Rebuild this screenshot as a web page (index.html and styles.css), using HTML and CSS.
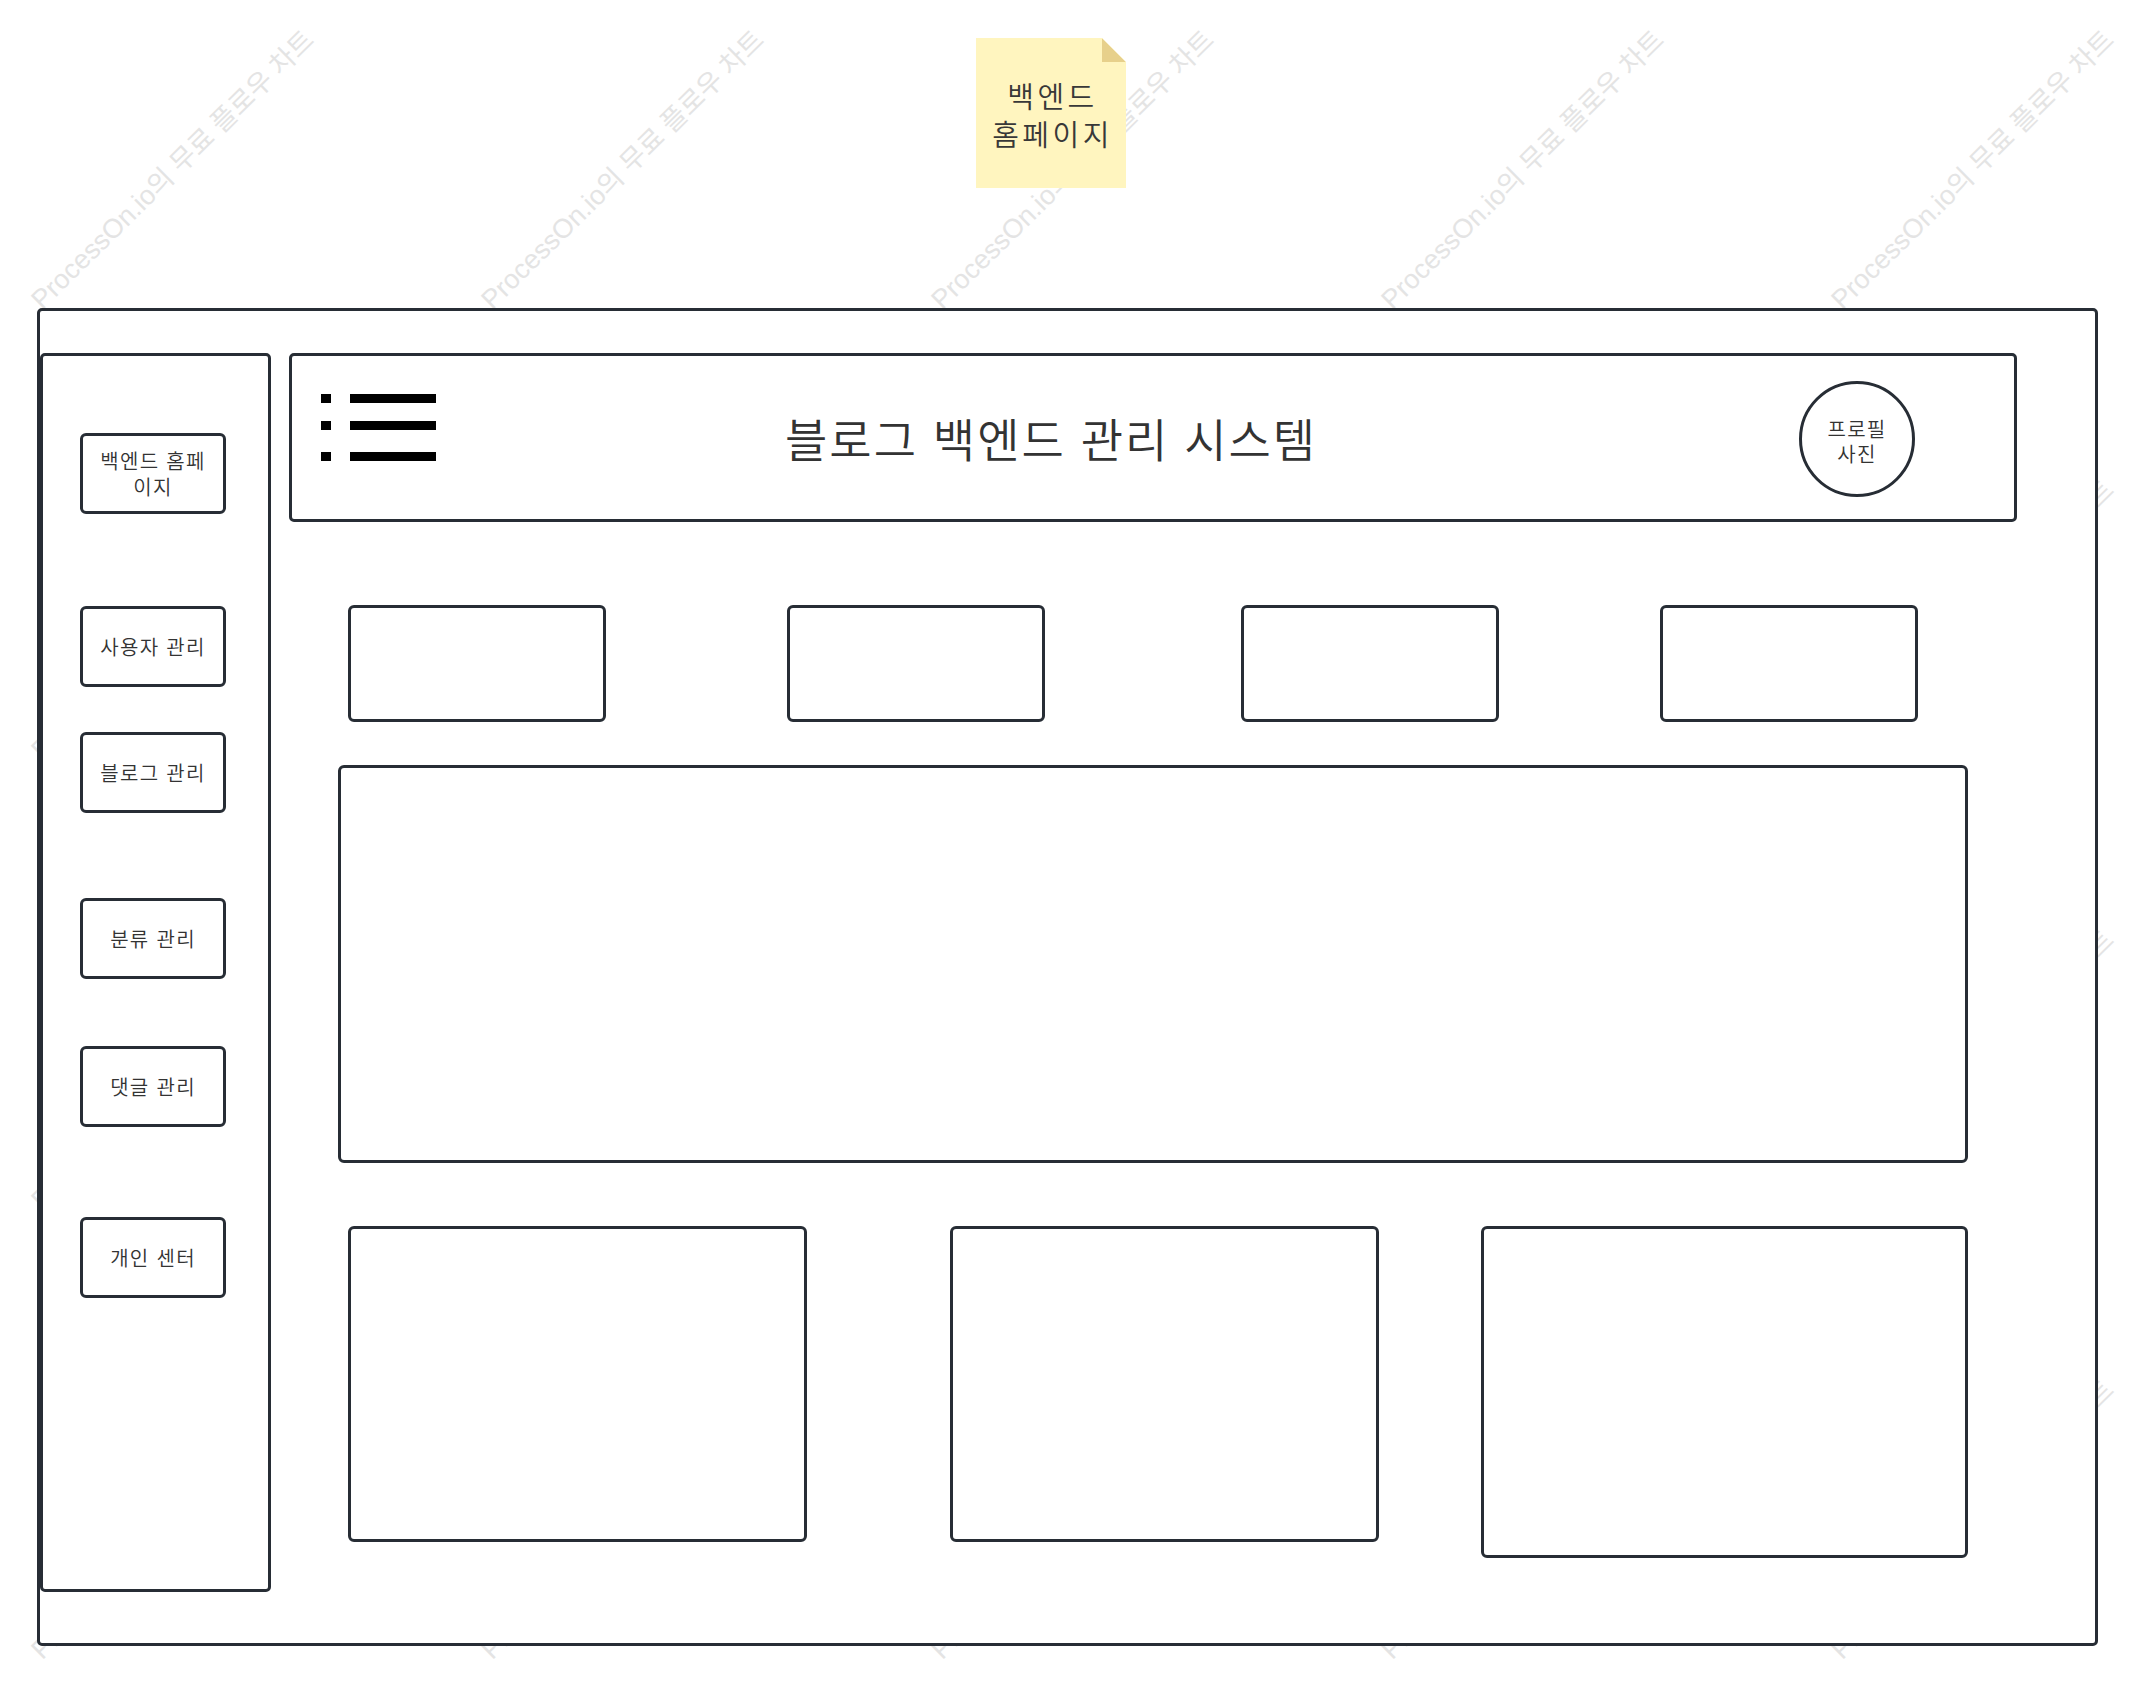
FILE: index.html
```html
<!DOCTYPE html>
<html lang="ko">
<head>
<meta charset="utf-8">
<title>블로그 백엔드 관리 시스템</title>
<link rel="stylesheet" href="styles.css">
</head>
<body>
<div class="canvas">
  <div class="watermarks">
    <div class="wm"><span>ProcessOn.io의 무료 플로우 차트</span></div>
    <div class="wm"><span>ProcessOn.io의 무료 플로우 차트</span></div>
    <div class="wm"><span>ProcessOn.io의 무료 플로우 차트</span></div>
    <div class="wm"><span>ProcessOn.io의 무료 플로우 차트</span></div>
    <div class="wm"><span>ProcessOn.io의 무료 플로우 차트</span></div>
    <div class="wm"><span>ProcessOn.io의 무료 플로우 차트</span></div>
    <div class="wm"><span>ProcessOn.io의 무료 플로우 차트</span></div>
    <div class="wm"><span>ProcessOn.io의 무료 플로우 차트</span></div>
    <div class="wm"><span>ProcessOn.io의 무료 플로우 차트</span></div>
    <div class="wm"><span>ProcessOn.io의 무료 플로우 차트</span></div>
    <div class="wm"><span>ProcessOn.io의 무료 플로우 차트</span></div>
    <div class="wm"><span>ProcessOn.io의 무료 플로우 차트</span></div>
    <div class="wm"><span>ProcessOn.io의 무료 플로우 차트</span></div>
    <div class="wm"><span>ProcessOn.io의 무료 플로우 차트</span></div>
    <div class="wm"><span>ProcessOn.io의 무료 플로우 차트</span></div>
    <div class="wm"><span>ProcessOn.io의 무료 플로우 차트</span></div>
    <div class="wm"><span>ProcessOn.io의 무료 플로우 차트</span></div>
    <div class="wm"><span>ProcessOn.io의 무료 플로우 차트</span></div>
    <div class="wm"><span>ProcessOn.io의 무료 플로우 차트</span></div>
    <div class="wm"><span>ProcessOn.io의 무료 플로우 차트</span></div>
  </div>

  <div class="content">
    <div class="sticky"><div class="sticky-text">백엔드<br>홈페이지</div></div>

    <div class="frame">
      <aside class="sidebar">
        <div class="nav nav-1">백엔드 홈페<br>이지</div>
        <div class="nav nav-2">사용자 관리</div>
        <div class="nav nav-3">블로그 관리</div>
        <div class="nav nav-4">분류 관리</div>
        <div class="nav nav-5">댓글 관리</div>
        <div class="nav nav-6">개인 센터</div>
      </aside>

      <main class="main">
        <header class="header">
          <svg class="menu-icon" width="115" height="67" viewBox="0 0 115 67" aria-hidden="true">
            <rect x="0" y="0" width="10" height="9" fill="#000"/>
            <rect x="29" y="0" width="86" height="9" fill="#000"/>
            <rect x="0" y="27" width="10" height="9" fill="#000"/>
            <rect x="29" y="27" width="86" height="9" fill="#000"/>
            <rect x="0" y="58" width="10" height="9" fill="#000"/>
            <rect x="29" y="58" width="86" height="9" fill="#000"/>
          </svg>
          <h1 class="title">블로그 백엔드 관리 시스템</h1>
          <div class="avatar">프로필<br>사진</div>
        </header>

        <section class="stats">
          <div class="box stat stat-1"></div>
          <div class="box stat stat-2"></div>
          <div class="box stat stat-3"></div>
          <div class="box stat stat-4"></div>
        </section>

        <section class="box panel"></section>

        <section class="bottom">
          <div class="box card card-1"></div>
          <div class="box card card-2"></div>
          <div class="box card card-3"></div>
        </section>
      </main>
    </div>
  </div>
</div>
</body>
</html>
```

FILE: styles.css
```css
* {
  box-sizing: border-box;
}

html, body {
  margin: 0;
  padding: 0;
  background: #ffffff;
}

body {
  font-family: "Noto Sans CJK KR", "Liberation Sans", sans-serif;
  color: #333333;
}

.canvas {
  position: relative;
  width: 2134px;
  height: 1682px;
  overflow: hidden;
  background: #ffffff;
}

/* watermark layer, under the diagram */
.watermarks {
  position: absolute;
  inset: 0;
  display: grid;
  grid-template-columns: repeat(5, 450px);
  grid-auto-rows: 450px;
  z-index: 0;
  pointer-events: none;
}

.wm {
  position: relative;
}

.wm span {
  position: absolute;
  left: 171px;
  top: 168px;
  transform: translate(-50%, -50%) rotate(-44.5deg);
  white-space: nowrap;
  font-family: "Liberation Sans", "Noto Sans CJK KR", sans-serif;
  font-size: 27px;
  color: #e4e4e4;
}

.content {
  position: relative;
  z-index: 1;
  padding-top: 38px;
}

/* sticky note */
.sticky {
  position: relative;
  margin-left: 976px;
  width: 150px;
  height: 150px;
  background: #fff5bf;
  clip-path: polygon(0 0, calc(100% - 24px) 0, 100% 24px, 100% 100%, 0 100%);
  display: flex;
  align-items: center;
  justify-content: center;
}

.sticky::after {
  content: "";
  position: absolute;
  top: 0;
  right: 0;
  width: 24px;
  height: 24px;
  background: #e7d08b;
  clip-path: polygon(0 0, 0 100%, 100% 100%);
}

.sticky-text {
  font-size: 29px;
  font-weight: 350;
  line-height: 38px;
  letter-spacing: 3.5px;
  text-align: center;
  color: #383838;
  margin-top: 2px;
  margin-left: 3px;
}

/* outer frame */
.frame {
  margin-top: 120px;
  margin-left: 37px;
  width: 2061px;
  height: 1338px;
  border: 3px solid #272d35;
  border-radius: 5px;
  background: #ffffff;
  display: flex;
  align-items: flex-start;
  padding-top: 42px;
}

.sidebar {
  width: 231px;
  height: 1239px;
  border: 3px solid #272d35;
  border-radius: 5px;
  background: #ffffff;
  display: flex;
  flex-direction: column;
  padding-left: 37px;
}

.nav {
  width: 146px;
  height: 81px;
  border: 3px solid #272d35;
  border-radius: 6px;
  background: #ffffff;
  display: flex;
  align-items: center;
  justify-content: center;
  text-align: center;
  font-size: 20px;
  font-weight: 350;
  line-height: 25.5px;
  letter-spacing: 1.3px;
  color: #333333;
}

.nav-1 { margin-top: 77px; }
.nav-2 { margin-top: 92px; }
.nav-3 { margin-top: 45px; }
.nav-4 { margin-top: 85px; }
.nav-5 { margin-top: 67px; }
.nav-6 { margin-top: 90px; }

.main {
  margin-left: 18px;
  width: 1728px;
  display: flex;
  flex-direction: column;
}

.header {
  height: 169px;
  border: 3px solid #272d35;
  border-radius: 5px;
  background: #ffffff;
  display: flex;
  align-items: center;
  padding-left: 29px;
}

.menu-icon {
  align-self: flex-start;
  margin-top: 38px;
  flex: none;
}

.title {
  margin: 0 0 0 349px;
  font-size: 46px;
  font-weight: 350;
  letter-spacing: 2px;
  line-height: 1;
  color: #333333;
  white-space: nowrap;
  position: relative;
  top: -1px;
}

.avatar {
  margin-left: auto;
  margin-right: 99px;
  width: 116px;
  height: 116px;
  border: 3px solid #272d35;
  border-radius: 50%;
  display: flex;
  align-items: center;
  justify-content: center;
  text-align: center;
  font-size: 20px;
  font-weight: 350;
  line-height: 25.5px;
  letter-spacing: 1.3px;
  color: #333333;
  margin-top: 2px;
  padding-top: 5px;
  flex: none;
}

.box {
  border: 3px solid #272d35;
  border-radius: 6px;
  background: #ffffff;
}

.stats {
  display: flex;
  margin-top: 83px;
  padding-left: 59px;
}

.stat {
  width: 258px;
  height: 117px;
}

.stat-2 { margin-left: 181px; }
.stat-3 { margin-left: 196px; }
.stat-4 { margin-left: 161px; }

.panel {
  margin-top: 43px;
  margin-left: 49px;
  width: 1630px;
  height: 398px;
}

.bottom {
  display: flex;
  align-items: flex-start;
  margin-top: 63px;
  padding-left: 59px;
}

.card {
  height: 316px;
}

.card-1 { width: 459px; }
.card-2 { width: 429px; margin-left: 143px; }
.card-3 { width: 487px; height: 332px; margin-left: 102px; }
```
